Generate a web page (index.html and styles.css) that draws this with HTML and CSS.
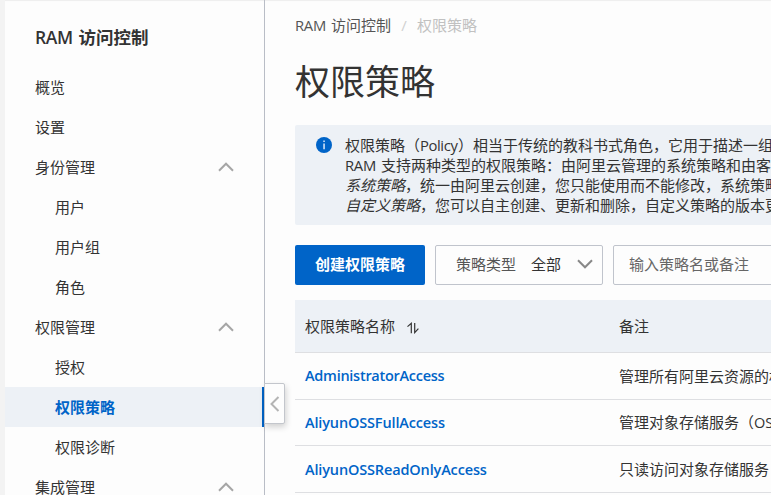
FILE: index.html
```html
<!DOCTYPE html>
<html lang="zh-CN">
<head>
<meta charset="utf-8">
<title>RAM 访问控制</title>
<link rel="stylesheet" href="styles.css">
</head>
<body>
<div class="app">
  <nav class="sidebar">
    <h2 class="product"><span class="product-latin">RAM </span>访问控制</h2>
    <ul class="menu">
      <li class="item">概览</li>
      <li class="item">设置</li>
      <li class="item group">身份管理<svg class="chevron" viewBox="0 0 16 10"><path d="M1 8.7 8 1.7l7 7"/></svg></li>
      <li class="item sub">用户</li>
      <li class="item sub">用户组</li>
      <li class="item sub">角色</li>
      <li class="item group">权限管理<svg class="chevron" viewBox="0 0 16 10"><path d="M1 8.7 8 1.7l7 7"/></svg></li>
      <li class="item sub">授权</li>
      <li class="item sub active">权限策略</li>
      <li class="item sub">权限诊断</li>
      <li class="item group">集成管理<svg class="chevron" viewBox="0 0 16 10"><path d="M1 8.7 8 1.7l7 7"/></svg></li>
    </ul>
    <button class="collapse" aria-label="收起"><svg viewBox="0 0 10 16"><path d="M8.5 1 1.5 8l7 7"/></svg></button>
  </nav>
  <main class="content">
    <div class="breadcrumb"><span><span class="ram">RAM </span>访问控制</span><span class="slash">/</span><span class="current">权限策略</span></div>
    <h1 class="title">权限策略</h1>
    <section class="notice">
      <svg class="info" viewBox="0 0 16 16"><circle cx="8" cy="8" r="8"/><path d="M7.3 3.6h1.5v1.5H7.3zM7.3 6.6h1.5v5.6H7.3z"/></svg>
      <div class="notice-text">
        <p>权限策略（<span class="policy">Policy</span>）相当于传统的教科书式角色，它用于描述一组</p>
        <p><span class="ram">RAM </span>支持两种类型的权限策略：由阿里云管理的系统策略和由客</p>
        <p><em>系统策略</em>，统一由阿里云创建，您只能使用而不能修改，系统策略</p>
        <p><em>自定义策略</em>，您可以自主创建、更新和删除，自定义策略的版本更</p>
      </div>
    </section>
    <div class="toolbar">
      <button class="create">创建权限策略</button>
      <div class="select"><span class="select-label">策略类型</span><span>全部</span><svg class="arrow" viewBox="0 0 16 10"><path d="M1 1.3l7 7 7-7"/></svg></div>
      <div class="search">输入策略名或备注</div>
    </div>
    <div class="table">
      <div class="row head"><div>权限策略名称<svg class="sort" viewBox="0 0 12 12"><path d="M.5 4.6 4.3 1.3V11.2M7.7 1v9.6L11.4 6.6"/></svg></div><div>备注</div></div>
      <div class="row"><div><a class="link tight">AdministratorAccess</a></div><div>管理所有阿里云资源的权</div></div>
      <div class="row"><div><a class="link">AliyunOSSFullAccess</a></div><div>管理对象存储服务（<span class="oss">OSS</span></div></div>
      <div class="row"><div><a class="link">AliyunOSSReadOnlyAccess</a></div><div>只读访问对象存储服务</div></div>
    </div>
  </main>
</div>
</body>
</html>
```
FILE: styles.css
```css
* { box-sizing: border-box; }
body {
  margin: 0;
  overflow: hidden;
  background: #fdfdfd;
  color: #333;
  font: 15px/20px "Open Sans", "Noto Sans CJK SC", sans-serif;
}
h1, h2, p, ul { margin: 0; padding: 0; }
ul { list-style: none; }
svg { fill: none; flex: none; }
button { font: inherit; padding: 0; }
.app {
  display: flex;
  width: 771px;
  height: 495px;
  overflow: hidden;
  border-left: 5px solid #f3f3f3;
  box-shadow: inset 0 2px 1px -1px #eee;
}
.sidebar {
  position: relative;
  flex: none;
  width: 260px;
  border-right: 1px solid #b9bdc6;
}
.product {
  display: flex;
  height: 67px;
  padding: 25px 0 0 30px;
  font-size: 17.5px;
  line-height: 24px;
  font-weight: 700;
  white-space: pre;
}
.product-latin { width: 43.5px; font-size: 17.5px; font-weight: 600; letter-spacing: -.4px; }
.item {
  display: flex;
  align-items: center;
  height: 40px;
  padding: 0 30px;
}
.group { justify-content: space-between; }
.sub { padding-left: 50px; }
.active {
  background: #edf1f6;
  color: #0064c8;
  font-weight: 700;
  border-right: 2px solid #0064c8;
}
.chevron { width: 16px; height: 10px; stroke: #a6a6a6; stroke-width: 2; }
.collapse {
  position: absolute;
  left: 259px;
  top: 383px;
  width: 21px;
  height: 41px;
  display: flex;
  align-items: center;
  justify-content: center;
  background: #fdfdfd;
  border: 1px solid #c3c6cc;
  border-radius: 0 2px 2px 0;
  box-shadow: 1px 3px 6px rgba(0,0,0,.18);
}
.collapse svg { width: 10px; height: 16px; stroke: #b4b4b4; stroke-width: 2; }
.content { flex: none; width: 540px; padding: 15px 0 0 30px; white-space: nowrap; }
.breadcrumb { display: flex; height: 20px; color: #555; }
.ram { display: inline-block; width: 36px; white-space: pre; font-size: 14.8px; letter-spacing: -.3px; }
.slash { width: 26px; text-align: center; color: #d0d0d0; }
.current { color: #c1c1c1; }
.title { margin-top: 22px; font-size: 35px; line-height: 50px; font-weight: 400; }
.notice {
  display: flex;
  height: 100px;
  margin-top: 18px;
  padding: 10px 0 0 21px;
  background: #edf1f6;
  border-radius: 2px;
}
.info { width: 16px; height: 16px; margin: 2px 13px 0 0; }
.info circle { fill: #0064c8; }
.info path { fill: #dce9f8; }
.notice-text p { height: 20px; }
.policy { display: inline-block; width: 38px; font-size: 14.8px; letter-spacing: -.4px; }
.toolbar { display: flex; gap: 10px; height: 40px; margin-top: 20px; }
.create {
  flex: none;
  width: 130px;
  padding-bottom: 2px;
  border: 0;
  border-radius: 2px;
  background: #0064c8;
  color: #fff;
  font-weight: 700;
}
.select, .search {
  display: flex;
  flex: none;
  align-items: center;
  padding-bottom: 2px;
  border: 1px solid #c0c4cc;
  border-radius: 2px;
}
.select { width: 168px; padding-left: 20px; padding-right: 9px; }
.select-label { margin-right: 15px; color: #555; }
.arrow { width: 16px; height: 10px; margin-left: auto; stroke: #888; stroke-width: 2; }
.search { width: 230px; padding-left: 15px; color: #666; }
.table { margin-top: 15px; }
.row {
  display: grid;
  grid-template-columns: 314px 1fr;
  align-items: center;
  height: 46.7px;
  padding-left: 10px;
  border-bottom: 1px solid #dedfe2;
}
.head { height: 53px; background: #edf1f6; }
.sort { width: 12px; height: 12px; margin-left: 12px; vertical-align: -2px; stroke: #333; stroke-width: 1.2; }
.link { color: #0064c8; font-size: 14.5px; font-weight: 600; letter-spacing: -.15px; }
.tight { letter-spacing: -.27px; }
.oss { font-size: 14.5px; }
```
